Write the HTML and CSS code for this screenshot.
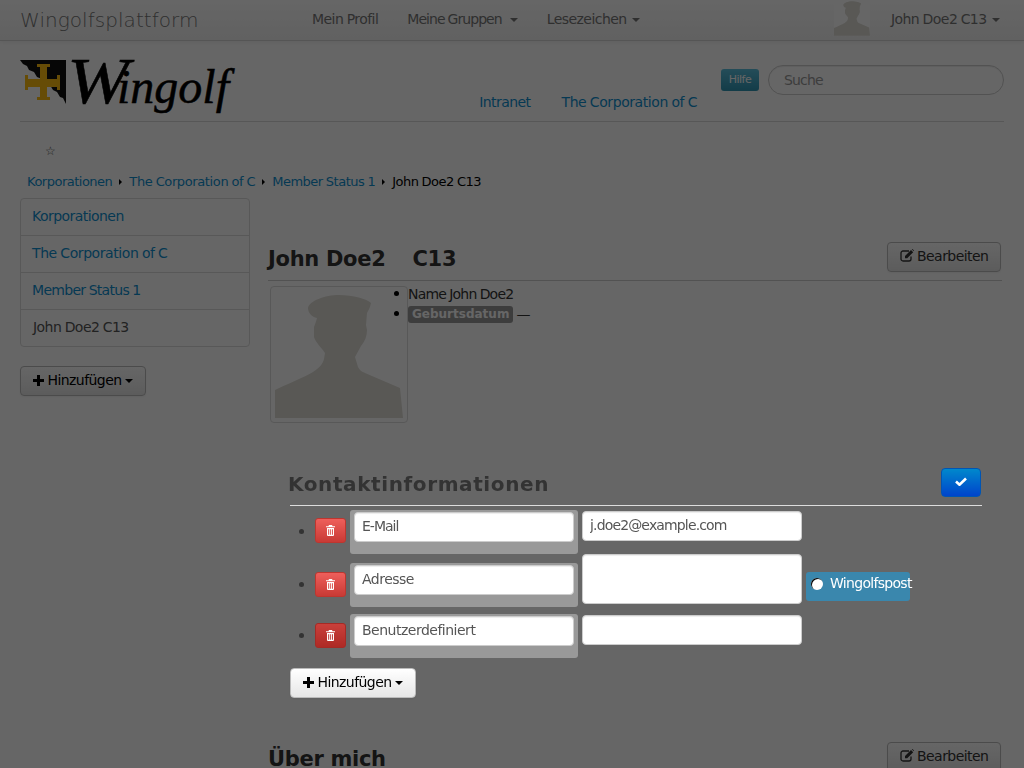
FILE: index.html
```html
<!DOCTYPE html>
<html lang="de">
<head>
<meta charset="utf-8">
<title>John Doe2 C13 - Wingolfsplattform</title>
<link rel="stylesheet" href="styles.css">
</head>
<body>
<svg class="defs" width="0" height="0">
  <symbol id="silhouette" viewBox="0 0 128 127">
    <path d="M0 127V99C10 94 30 86 38 81 44 77 48 73 49 68L50 62C46 56 41 52 39 46V36C40 33 41 31 42 27 37 26 33 22 33 17 34 10 50 4 64 4 78 4 92 8 96 12 95 17 93 20 92 22L91 34 92 39C92 45 90 50 86 55L80 66 83 76C85 80 88 81 90 82L125 97 128 127Z"/>
  </symbol>
  <symbol id="plus" viewBox="0 0 11 11"><path d="M4 0h3v4h4v3H7v4H4V7H0V4h4z"/></symbol>
  <symbol id="edit" viewBox="0 0 14 13">
    <path fill="none" stroke="currentColor" stroke-width="1.3" d="M11 7.500v2.500a2 2 0 0 1-2 2H3a2 2 0 0 1-2-2V4a2 2 0 0 1 2-2h6"/>
    <path d="M5 7l6-6 2.200 2.200-6 6H5zM11.800.3l.7-.3 1.500 1.500-.3.700z"/>
  </symbol>
  <symbol id="trash" viewBox="0 0 9 11">
    <path d="M3 0h3l.6 1.300H9v1H0v-1h2.400zM1 3h7v7a1 1 0 0 1-1 1H2a1 1 0 0 1-1-1zm1.200 1.200v5.500h1V4.200zm2 0v5.500h.8V4.200zm1.700 0v5.500h1V4.200z" fill-rule="evenodd"/>
  </symbol>
</svg>

<nav class="navbar">
  <a class="brand">Wingolfsplattform</a>
  <ul class="nav-menu">
    <li>Mein Profil</li>
    <li class="groups">Meine Gruppen <i class="caret"></i></li>
    <li>Lesezeichen <i class="caret"></i></li>
  </ul>
  <div class="nav-user">
    <svg class="nav-avatar"><use href="#silhouette"/></svg>
    <span>John Doe2 C13 <i class="caret"></i></span>
  </div>
</nav>

<div class="container">
  <header class="site-header">
    <div class="logo">
      <svg class="logo-flag" viewBox="0 0 46 44">
        <path class="flag-black" d="M0 0H46V44L43 38 40 37 37 32 33 30 30 25 25 23 22 19 17 17 14 12 9 10 7 6 3 4Z"/>
        <path class="flag-gold" d="M17 4H30V7H27V19H37V15H40V30H37V27H27V37H30V40H17V37H20V27H8V30H5V15H8V19H20V7H17Z"/>
      </svg>
      <span class="logo-text"><span class="logo-w">W</span>ingolf</span>
    </div>
    <div class="header-links">
      <a>Intranet</a>
      <a class="wide">The Corporation of C</a>
    </div>
    <div class="header-tools">
      <span class="help-btn">Hilfe</span>
      <input class="search" type="text" placeholder="Suche">
    </div>
  </header>

  <div class="star-row">☆</div>

  <ul class="breadcrumb">
    <li><a>Korporationen</a></li>
    <li class="sep"></li>
    <li><a class="wide">The Corporation of C</a></li>
    <li class="sep"></li>
    <li><a class="narrow">Member Status 1</a></li>
    <li class="sep"></li>
    <li class="current">John Doe2 C13</li>
  </ul>

  <div class="layout">
    <aside class="sidebar">
      <ul class="side-nav">
        <li><a>Korporationen</a></li>
        <li><a class="wide">The Corporation of C</a></li>
        <li><a class="narrow">Member Status 1</a></li>
        <li class="active">John Doe2 C13</li>
      </ul>
      <button class="btn btn-add"><svg class="ico-plus"><use href="#plus"/></svg> Hinzufügen <i class="caret dark"></i></button>
    </aside>

    <main class="main">
      <div class="title-row">
        <h1><span class="first-name">John Doe2</span><span>C13</span></h1>
        <button class="btn btn-edit"><svg class="ico-edit"><use href="#edit"/></svg> Bearbeiten</button>
      </div>

      <div class="profile">
        <div class="thumb"><svg class="thumb-img"><use href="#silhouette"/></svg></div>
        <ul class="facts">
          <li>Name John Doe2</li>
          <li><span class="label">Geburtsdatum</span> —</li>
        </ul>
      </div>

      <section class="contact">
        <div class="contact-head">
          <h2>Kontaktinformationen</h2>
          <button class="btn-save"><svg class="ico-check" viewBox="0 0 12 9"><path d="M1 4.500l3.500 3.200L11 1.500"/></svg></button>
        </div>
        <ul class="contact-list">
          <li class="row row-mail">
            <span class="dot"></span>
            <button class="btn-del"><svg class="ico-trash"><use href="#trash"/></svg></button>
            <div class="label-box"><input class="field tight" type="text" value="E-Mail"></div>
            <input class="field value" type="text" value="j.doe2@example.com">
          </li>
          <li class="row row-address">
            <span class="dot"></span>
            <button class="btn-del"><svg class="ico-trash"><use href="#trash"/></svg></button>
            <div class="label-box"><input class="field" type="text" value="Adresse"></div>
            <textarea class="field value area"></textarea>
            <label class="post-badge"><input class="radio" type="radio" name="post"><span>Wingolfspost</span></label>
          </li>
          <li class="row row-custom">
            <span class="dot"></span>
            <button class="btn-del"><svg class="ico-trash"><use href="#trash"/></svg></button>
            <div class="label-box"><input class="field" type="text" value="Benutzerdefiniert"></div>
            <input class="field value" type="text">
          </li>
        </ul>
        <button class="btn btn-add light"><svg class="ico-plus"><use href="#plus"/></svg> Hinzufügen <i class="caret dark"></i></button>
      </section>

      <div class="title-row about">
        <h1>Über mich</h1>
        <button class="btn btn-edit"><svg class="ico-edit"><use href="#edit"/></svg> Bearbeiten</button>
      </div>
    </main>
  </div>
</div>

<div class="overlay"></div>
</body>
</html>
```
FILE: styles.css
```css
* { box-sizing: border-box; }
html, body { margin: 0; padding: 0; overflow: hidden; height: 768px; }
body {
  font-family: "DejaVu Sans", sans-serif;
  font-size: 14px;
  line-height: 20px;
  letter-spacing: -.55px;
  word-spacing: -.5px;
  color: #333;
  background: #fff;
}
ul { list-style: none; margin: 0; padding: 0; }
a { color: #0f90d0; }
.wide { letter-spacing: -.42px; }
.narrow { letter-spacing: -.7px; }
button { font-family: inherit; letter-spacing: inherit; word-spacing: inherit; }
.defs { position: absolute; }

.overlay {
  position: fixed;
  inset: 0;
  background: rgba(0, 0, 0, .6);
  z-index: 10;
}

.caret {
  display: inline-block;
  width: 0;
  height: 0;
  border-top: 4px solid #777;
  border-left: 4px solid transparent;
  border-right: 4px solid transparent;
  vertical-align: middle;
  margin-left: 2px;
}
.caret.dark { border-top-color: #000; margin-left: 0; }

/* navbar */
.navbar {
  height: 41px;
  display: flex;
  background: linear-gradient(#fff, #f2f2f2);
  border-bottom: 1px solid #d4d4d4;
  box-shadow: 0 1px 4px rgba(0, 0, 0, .07);
  padding-left: 20px;
  color: #777;
}
.brand {
  color: #777;
  font-size: 20px;
  font-weight: 200;
  line-height: 40px;
  width: 292px;
  white-space: nowrap;
  letter-spacing: .05px;
  word-spacing: 0;
}
.nav-menu { display: flex; gap: 29px; line-height: 38px; }
.groups { letter-spacing: -.95px; }
.groups .caret { margin-left: 5px; }
.nav-user { margin-left: auto; display: flex; padding-right: 24px; line-height: 38px; }
.nav-avatar { width: 36px; height: 36px; fill: #dedcd5; margin-right: 21px; background: #fff; }

/* header */
.container { padding: 0 20px; }
.site-header {
  height: 81px;
  display: flex;
  border-bottom: 1px solid #d9d9d9;
}
.logo { display: flex; align-items: flex-start; width: 216px; padding-top: 19px; }
.logo-flag { width: 46px; height: 44px; flex: none; }
.flag-black { fill: #111; }
.flag-gold { fill: #ffbf10; }
.logo-text {
  font-family: "Liberation Serif", serif;
  font-style: italic;
  font-size: 48px;
  line-height: 54px;
  color: #000;
  margin: -6px 0 0 1px;
  white-space: nowrap;
  letter-spacing: 0;
  -webkit-text-stroke: .5px #000;
}
.logo-w {
  display: inline-block;
  font-size: 65px;
  width: 50px;
  transform: scaleX(1.14);
  transform-origin: left;
}
.header-links {
  margin-left: auto;
  display: flex;
  gap: 31px;
  padding-top: 51px;
}
.header-tools {
  width: 283px;
  margin-left: 24px;
  display: flex;
  align-items: center;
  justify-content: space-between;
  height: 30px;
  margin-top: 24px;
}
.help-btn {
  width: 38px;
  height: 22px;
  border-radius: 3px;
  background: linear-gradient(#5bc0de, #2f96b4);
  color: #fff;
  font-size: 11px;
  line-height: 22px;
  text-align: center;
}
.search {
  width: 236px;
  height: 30px;
  border: 1px solid #ccc;
  border-radius: 15px;
  padding: 0 15px 1px;
  font: inherit;
  letter-spacing: -.85px;
  background: #fff;
  box-shadow: inset 0 1px 1px rgba(0, 0, 0, .075);
}
.search::placeholder { color: #999; opacity: 1; }

.star-row { height: 48px; padding: 19px 0 0 25px; font-size: 12px; color: #555; letter-spacing: 0; }

.breadcrumb {
  display: flex;
  align-items: center;
  height: 24px;
  padding-left: 7px;
  font-size: 13px;
  letter-spacing: -.5px;
  color: #000;
}
.breadcrumb .wide { letter-spacing: -.38px; }
.breadcrumb .narrow { letter-spacing: -.5px; }
.breadcrumb .sep {
  width: 0;
  height: 0;
  border-left: 3px solid #000;
  border-top: 3px solid transparent;
  border-bottom: 3px solid transparent;
  margin: 0 7px;
}

/* layout */
.layout { display: flex; gap: 18px; margin-top: 4px; }
.sidebar { width: 230px; flex: none; }
.side-nav { border: 1px solid #ddd; border-radius: 4px; }
.side-nav li { height: 37px; line-height: 34px; padding-left: 11px; border-top: 1px solid #ddd; }
.side-nav li:first-child { border-top: 0; height: 36px; }
.side-nav .active { color: #555; padding-left: 12px; }

.btn {
  height: 30px;
  border: 1px solid #bbb;
  border-radius: 4px;
  background: linear-gradient(#fff, #e6e6e6);
  font-size: 14px;
  color: #333;
  padding: 0 0 2px;
  box-shadow: inset 0 1px 0 rgba(255, 255, 255, .2), 0 1px 2px rgba(0, 0, 0, .05);
}
.btn-add { width: 126px; margin-top: 19px; color: #000; }
.ico-plus { width: 11px; height: 11px; fill: #000; vertical-align: -1px; }
.btn-edit { width: 114px; margin-right: 1px; }
.ico-edit { width: 14px; height: 13px; fill: currentColor; vertical-align: -1px; }

/* main */
.main { width: 734px; padding-top: 44px; flex: none; }
.title-row {
  height: 39px;
  display: flex;
  justify-content: space-between;
  border-bottom: 1px solid #ccc;
}
.title-row h1 {
  margin: 0;
  font-size: 21px;
  line-height: 34px;
  color: #333;
  letter-spacing: -.3px;
  word-spacing: 0;
}
.first-name { margin-right: 27px; }

.profile { display: flex; margin: 5px 0 0 2px; height: 138px; }
.thumb {
  width: 138px;
  height: 137px;
  padding: 4px;
  border: 1px solid #ddd;
  border-radius: 4px;
}
.thumb-img { width: 128px; height: 127px; fill: #dedcd5; display: block; }
.facts li { position: relative; height: 20px; }
.facts li::before {
  content: "";
  position: absolute;
  left: -14px;
  top: 7px;
  width: 5px;
  height: 5px;
  border-radius: 50%;
  background: #000;
}
.facts { margin-top: -2px; letter-spacing: -.8px; }
.label {
  display: inline-block;
  background: #999;
  color: #fff;
  font-size: 12px;
  font-weight: bold;
  line-height: 17px;
  padding: 0 4px;
  border-radius: 3px;
  letter-spacing: 0;
  vertical-align: 1px;
}

/* editable contact box, above the overlay */
.contact {
  position: relative;
  z-index: 11;
  width: 692px;
  margin: 44px 0 0 22px;
}
.contact-head {
  height: 38px;
  display: flex;
  justify-content: space-between;
  border-bottom: 1px solid #ddd;
}
.contact-head h2 {
  margin: 0 0 0 -2px;
  font-size: 20px;
  line-height: 32px;
  color: #333;
  letter-spacing: .6px;
}
.btn-save {
  width: 40px;
  height: 29px;
  margin-right: 1px;
  padding: 0;
  border: 1px solid #0055b3;
  border-radius: 4px;
  background: linear-gradient(#0088cc, #0044cc);
}
.ico-check { width: 12px; height: 9px; fill: none; stroke: #fff; stroke-width: 2.6; display: block; margin: 0 auto 3px; }

.contact-list { margin-top: 4px; }
.row { display: flex; align-items: flex-start; }
.row-mail { height: 44px; }
.row-address { height: 53px; }
.row-custom { height: 44px; margin-top: 7px; }

.dot {
  width: 5px;
  height: 5px;
  border-radius: 50%;
  background: #333;
  margin: 19px 0 0 9px;
}
.btn-del {
  width: 31px;
  height: 25px;
  margin: 8px 4px 0 11px;
  padding: 0;
  border: 1px solid #bd362f;
  border-radius: 3px;
  background: linear-gradient(#ee5f5b, #c83a35);
}
.ico-trash { width: 9px; height: 11px; fill: #fff; display: block; margin: 0 auto 1px; }
.label-box {
  width: 228px;
  height: 44px;
  padding: 2px 4px 0;
  border-radius: 3px;
  background: #999;
}
.field {
  display: block;
  width: 220px;
  height: 30px;
  padding: 0 7px 2px;
  border: 1px solid #ccc;
  border-radius: 4px;
  background: #fff;
  font: inherit;
  letter-spacing: -.5px;
  color: #555;
  box-shadow: inset 0 1px 1px rgba(0, 0, 0, .075);
}
.field.tight { letter-spacing: -1px; }
.value { margin: 1px 0 0 4px; resize: none; letter-spacing: -.85px; }
.area { height: 50px; margin-top: 0; }

.row-address .dot { margin-top: 28px; }
.row-address .btn-del { margin-top: 18px; }
.row-address .label-box { margin-top: 9px; }
.row-custom .btn-del { margin-top: 9px; background: linear-gradient(#c9403b, #ae2a25); border-color: #a52a25; }
.row-custom .dot { margin-top: 19px; }

.post-badge {
  display: flex;
  align-items: flex-start;
  width: 104px;
  height: 29px;
  margin: 18px 0 0 4px;
  padding: 1px 0 0 5px;
  background: #3a87ad;
  border-radius: 3px;
  color: #fff;
  white-space: nowrap;
  letter-spacing: -.7px;
}
.radio {
  appearance: none;
  width: 12px;
  height: 12px;
  margin: 5px 7px 0 0;
  border-radius: 50%;
  background: #fff;
  box-shadow: inset 1px 1px 0 #000;
  flex: none;
}

.light { margin-top: 10px; display: block; }

.about { margin-top: 44px; }
```
